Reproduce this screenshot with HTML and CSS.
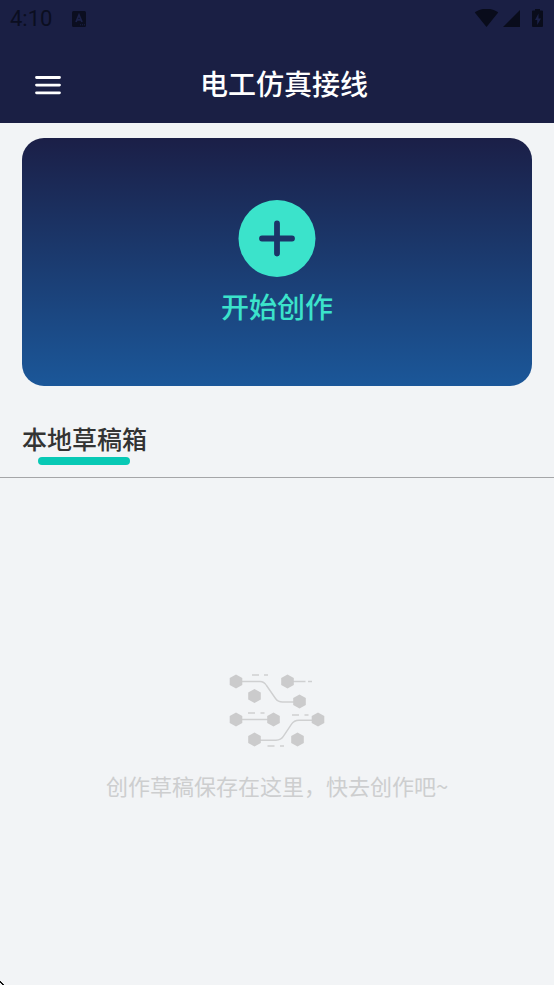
FILE: index.html
```html
<!DOCTYPE html>
<html lang="zh-CN">
<head>
<meta charset="utf-8">
<meta name="viewport" content="width=device-width, initial-scale=1">
<title>电工仿真接线</title>
<link rel="stylesheet" href="styles.css">
</head>
<body>
<header class="header">
  <div class="status">
    <span class="clock">4:10</span>
    <svg class="status-app" width="14" height="16" viewBox="0 0 14 16" aria-hidden="true">
      <rect width="14" height="16" rx="1.5" fill="#0b0e20"/>
      <path d="M4 11 7 4l3 7M5 8.8h4" fill="none" stroke="#1b2148" stroke-width="1.8"/>
      <path d="M8 13.8h1M10 13.8h1M12 13.8h1" stroke="#1b2148" stroke-width="1"/>
    </svg>
    <svg class="status-icons" width="70" height="20" viewBox="0 0 70 20" aria-hidden="true">
      <path d="M.8 3.600C7.500-1.600 17.500-1.600 24.200 3.600L12.500 18Z" fill="#090c1b"/>
      <path d="M29 18 46 1v17Z" fill="#090c1b"/>
      <path d="M61 1.500V0h5v1.500h2q1 0 1 1V17q0 1-1 1h-9q-1 0-1-1V2.500q0-1 1-1Z" fill="#090c1b"/>
      <path d="M64.500 4.500 61 11h2.200v5l3.800-6.500h-2.500Z" fill="#1b2148"/>
    </svg>
  </div>
  <div class="bar">
    <button class="menu" type="button" aria-label="菜单">
      <svg width="28" height="20" viewBox="0 0 28 20" aria-hidden="true">
        <path d="M2.500 2.500h23M2.500 10.100h23M2.500 17.800h23" stroke="#fff" stroke-width="2.800" stroke-linecap="round"/>
      </svg>
    </button>
    <h1 class="title">电工仿真接线</h1>
  </div>
</header>
<main class="main">
  <button class="create" type="button">
    <svg width="78" height="78" viewBox="0 0 78 78" aria-hidden="true">
      <circle cx="39" cy="38.500" r="38.500" fill="#3be3cb"/>
      <path d="M24 38.500h30M39 23.500v30" stroke="#1c3468" stroke-width="5.800" stroke-linecap="round"/>
    </svg>
    <span class="create-label">开始创作</span>
  </button>
  <div class="tabs">
    <h2 class="tab">本地草稿箱</h2>
  </div>
  <section class="empty">
    <svg width="96" height="76" viewBox="0 0 96 76" aria-hidden="true">
      <defs>
        <path id="node" d="M0-7 6.300-3.500v7L0 7l-6.300-3.500v-7Z" fill="#cbcbcc"/>
      </defs>
      <g fill="none" stroke="#cfd0d1" stroke-width="1.400">
        <path d="M7 8.500h24q4 0 6.500 4l9 13q2.500 3.500 7 3.500h16"/>
        <path d="M58 8.500h18.500M79 8.500h4"/>
        <path d="M7 46.500h37"/>
        <path d="M25 67.200h22q5 0 7.500-4l8-12q2.500-4 7.500-4h18"/>
        <path d="M23 2h7M35 2h4M19 40h7M31.500 40h4M63 42h7M75.500 42h4M38.500 73h7M51 73h4"/>
      </g>
      <use href="#node" x="7" y="8.500"/><use href="#node" x="58.500" y="8.500"/>
      <use href="#node" x="25.500" y="23"/><use href="#node" x="70.500" y="28.500"/>
      <use href="#node" x="7" y="46.500"/><use href="#node" x="44.500" y="46.500"/><use href="#node" x="89" y="46.500"/>
      <use href="#node" x="25.500" y="66.500"/><use href="#node" x="68.500" y="66.500"/>
    </svg>
    <p class="empty-text">创作草稿保存在这里，快去创作吧~</p>
  </section>
</main>
<svg class="corner" width="4" height="4" viewBox="0 0 4 4" aria-hidden="true">
  <path d="M0 0h1v1h1v1h1v1h1v1H2V3H1V2H0Z" fill="#111"/>
</svg>
</body>
</html>
```
FILE: styles.css
```css
* {
  box-sizing: border-box;
}

body {
  margin: 0;
  min-height: 100vh;
  position: relative;
  display: flex;
  flex-direction: column;
  background: #f2f4f6;
  font-family: "Noto Sans CJK SC", sans-serif;
}

h1,
h2,
p {
  margin: 0;
}

button {
  border: 0;
  padding: 0;
  background: none;
  font: inherit;
  cursor: pointer;
}

svg {
  display: block;
}

.header {
  background: #1a1f44;
}

.status {
  display: flex;
  align-items: center;
  gap: 20px;
  height: 38px;
  padding: 0 10px;
}

.clock {
  font: 22px/24px Roboto, sans-serif;
  color: #0b0e20;
}

.status-icons {
  margin-left: auto;
}

.bar {
  display: grid;
  grid-template-columns: 48px 1fr 48px;
  align-items: center;
  height: 85px;
  padding: 4px 20px 0 34px;
}

.menu {
  padding-top: 4px;
  justify-self: start;
}

.title {
  text-align: center;
  font-size: 28px;
  line-height: 40px;
  font-weight: 500;
  color: #fff;
}

.main {
  flex: 1;
  display: flex;
  flex-direction: column;
  padding-top: 15px;
}

.create {
  display: flex;
  flex-direction: column;
  align-items: center;
  gap: 8px;
  margin: 0 22px;
  padding: 62px 0 60px;
  border-radius: 22px;
  background: linear-gradient(#1b1f47, #1b5799);
}

.create-label {
  font-size: 28px;
  line-height: 40px;
  font-weight: 500;
  color: #3be3cb;
}

.tabs {
  display: flex;
  padding: 34px 22px 12px;
  border-bottom: 1px solid #a5a6a8;
}

.tab {
  font-size: 25px;
  line-height: 37px;
  font-weight: 500;
  color: #333;
}

.tab::after {
  content: "";
  display: block;
  width: 92px;
  height: 8px;
  margin-left: 16px;
  border-radius: 4px;
  background: #08c9b5;
}

.empty {
  flex: 1;
  display: flex;
  flex-direction: column;
  align-items: center;
  justify-content: center;
  gap: 20px;
  padding-top: 10px;
}

.empty-text {
  font-size: 22px;
  line-height: 32px;
  font-weight: 400;
  color: #cdcecf;
}

.corner {
  position: absolute;
  left: 0;
  bottom: 0;
}
```
